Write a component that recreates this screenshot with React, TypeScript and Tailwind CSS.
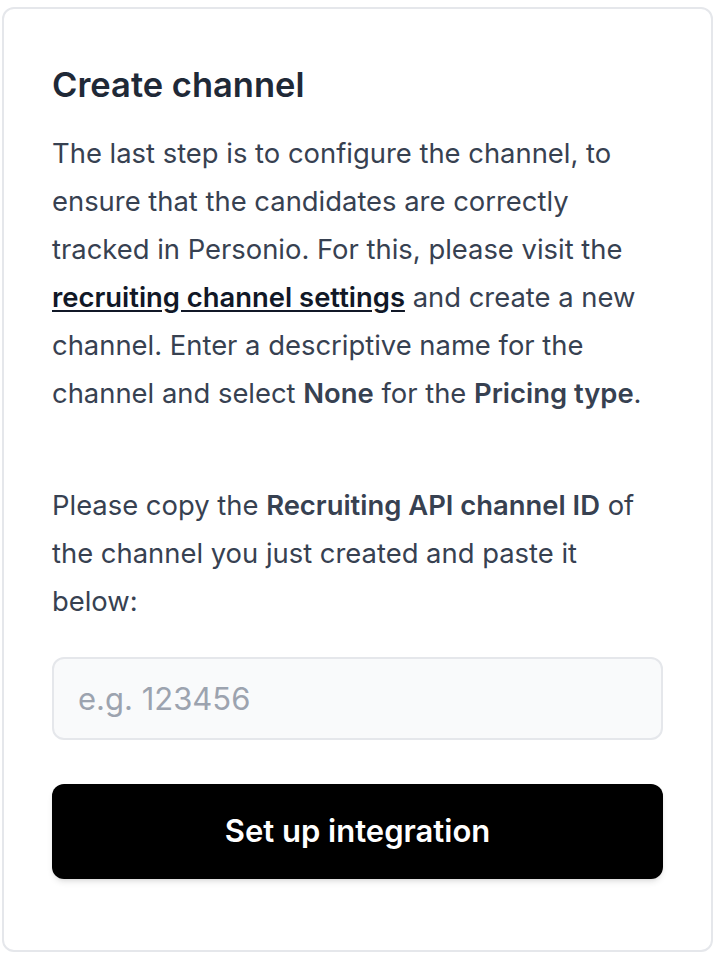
export default function App() {
  return (
    <div
      className="h-[960px] w-[724px] bg-white pl-[2px] pr-[11px] pt-[7px]"
      style={{ fontFamily: "Inter, 'Noto Sans', sans-serif" }}
    >
      <div className="flex h-[945px] flex-col rounded-[12px] border-2 border-[#e5e7eb] px-[48px] pt-[56px]">
        <h2 className="text-[34.5px] font-semibold leading-[40px] text-[#1f2937]">
          Create channel
        </h2>
        <p className="mt-[24px] whitespace-nowrap text-[27.4px] leading-[48px] text-[#374151]">
          The last step is to configure the channel, to
          <br />
          ensure that the candidates are correctly
          <br />
          tracked in Personio. For this, please visit the
          <br />
          <a href="#" className="font-semibold text-[#111827] underline underline-offset-[3px]">
            recruiting channel settings
          </a>{" "}
          and create a new
          <br />
          channel. Enter a descriptive name for the
          <br />
          channel and select <span className="font-semibold">None</span> for the{" "}
          <span className="font-semibold">Pricing type</span>.
        </p>
        <p className="mt-[64px] whitespace-nowrap text-[27.4px] leading-[48px] text-[#374151]">
          Please copy the{" "}
          <span className="font-semibold">Recruiting API channel ID</span> of
          <br />
          the channel you just created and paste it
          <br />
          below:
        </p>
        <input
          type="text"
          placeholder="e.g. 123456"
          className="mt-[32px] h-[83px] w-full rounded-[12px] border-2 border-[#e5e7eb] bg-[#f9fafb] px-[24px] text-[31px] text-[#1f2937] outline-none placeholder:text-[#9ca3af]"
        />
        <button className="mt-[44px] h-[95px] w-full rounded-[12px] bg-black text-[31px] font-semibold text-white shadow-md">
          Set up integration
        </button>
      </div>
    </div>
  );
}
